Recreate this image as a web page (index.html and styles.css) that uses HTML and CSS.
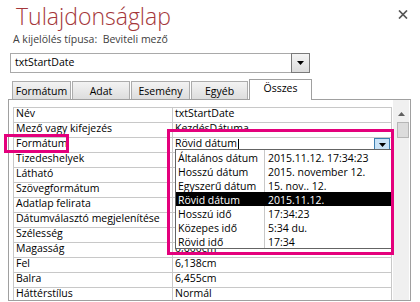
FILE: index.html
```html
<!DOCTYPE html>
<html lang="hu">
<head>
    <meta charset="UTF-8">
    <meta name="viewport" content="width=device-width, initial-scale=1.0">
    <title>Tulajdonságlap</title>
    <link rel="stylesheet" href="styles.css">
</head>
<body>
    <div class="pane">
        <div class="pane-head">
            <h1 class="pane-title">Tulajdonságlap</h1>
            <span class="close-btn">
                <svg width="10" height="9" viewBox="0 0 10 9">
                    <path d="M1 0.5 L9 8.5 M9 0.5 L1 8.5" stroke="#555" stroke-width="1.7" fill="none"/>
                </svg>
            </span>
        </div>
        <div class="sel-type">A kijelölés típusa:&nbsp; Beviteli mező</div>

        <div class="obj-combo">
            <span class="obj-combo-text">txtStartDate</span>
            <span class="combo-btn">
                <svg width="7" height="4" viewBox="0 0 7 4"><path d="M0 0 H7 L3.5 4 Z" fill="#000"/></svg>
            </span>
        </div>

        <div class="tabs">
            <div class="tab tab-fmt">Formátum</div>
            <div class="tab tab-data">Adat</div>
            <div class="tab tab-event">Esemény</div>
            <div class="tab tab-other">Egyéb</div>
            <div class="tab tab-all active">Összes</div>
        </div>

        <div class="sheet-box">
            <div class="sheet">
                <div class="cell">Név</div><div class="cell">txtStartDate</div>
                <div class="cell">Mező vagy kifejezés</div><div class="cell">KezdésDátuma</div>
                <div class="cell">Formátum</div>
                <div class="cell cell-edit">
                    <span>Rövid dátum</span><span class="caret"></span>
                    <span class="drop-btn">
                        <svg width="7" height="4" viewBox="0 0 7 4"><path d="M0 0 H7 L3.5 4 Z" fill="#000"/></svg>
                    </span>
                </div>
                <!-- az értékeket itt eltakarja a lenyíló lista -->
                <div class="cell">Tizedeshelyek</div><div class="cell"></div>
                <div class="cell">Látható</div><div class="cell"></div>
                <div class="cell">Szövegformátum</div><div class="cell"></div>
                <div class="cell">Adatlap felirata</div><div class="cell"></div>
                <div class="cell">Dátumválasztó megjelenítése</div><div class="cell"></div>
                <div class="cell">Szélesség</div><div class="cell"></div>
                <div class="cell">Magasság</div><div class="cell">0,600cm</div>
                <div class="cell">Fel</div><div class="cell">6,138cm</div>
                <div class="cell">Balra</div><div class="cell">6,455cm</div>
                <div class="cell">Háttérstílus</div><div class="cell">Normál</div>
            </div>

            <div class="vscroll">
                <span class="vscroll-up">
                    <svg width="7" height="4" viewBox="0 0 7 4"><path d="M0 4 H7 L3.5 0 Z" fill="#606060"/></svg>
                </span>
                <span class="vscroll-thumb"></span>
            </div>

            <!-- a Formátum lenyíló listája -->
            <div class="format-list">
                <div class="fl-row"><span class="fl-name">Általános dátum</span><span class="fl-sample">2015.11.12. 17:34:23</span></div>
                <div class="fl-row"><span class="fl-name">Hosszú dátum</span><span class="fl-sample">2015. november 12.</span></div>
                <div class="fl-row"><span class="fl-name">Egyszerű dátum</span><span class="fl-sample">15. nov.. 12.</span></div>
                <div class="fl-row selected"><span class="fl-name">Rövid dátum</span><span class="fl-sample">2015.11.12.</span></div>
                <div class="fl-row"><span class="fl-name">Hosszú idő</span><span class="fl-sample">17:34:23</span></div>
                <div class="fl-row"><span class="fl-name">Közepes idő</span><span class="fl-sample">5:34 du.</span></div>
                <div class="fl-row"><span class="fl-name">Rövid idő</span><span class="fl-sample">17:34</span></div>
            </div>
        </div>

        <div class="callout callout-label"></div>
        <div class="callout callout-list"></div>
    </div>
</body>
</html>
```

FILE: styles.css
```css
body {
    margin: 0;
    background-color: #fff;
    color: #000;
    font-family: "Open Sans", "Liberation Sans", sans-serif;
    font-size: 10.5px;
}

.pane {
    position: relative;
    width: 420px;
    height: 302px;
    overflow: hidden;
}

.pane-head {
    display: flex;
    justify-content: space-between;
    align-items: flex-start;
    height: 28px;
    padding: 2px 12px 0 16px;
}

.pane-title {
    margin: 0;
    font-size: 23px;
    font-weight: 300;
    line-height: 28px;
    color: #a4373a;
}

.close-btn {
    display: flex;
    margin-top: 8px;
}

.sel-type {
    padding-left: 13px;
    line-height: 18px;
    color: #404040;
}

/* objektumválasztó */
.obj-combo {
    display: flex;
    align-items: stretch;
    box-sizing: border-box;
    width: 300px;
    height: 20px;
    margin: 5px 0 0 10px;
    border: 1px solid #a9a9a9;
}

.obj-combo-text {
    flex: 1;
    padding-left: 4px;
    line-height: 16px;
}

.combo-btn {
    display: flex;
    align-items: center;
    justify-content: center;
    width: 17px;
    margin: -1px -1px -1px 0;
    border: 1px solid #7a7a7a;
    background: linear-gradient(#f4f4f4, #dcdcdc);
}

/* fülek */
.tabs {
    display: flex;
    align-items: flex-end;
    gap: 1px;
    height: 20px;
    margin: 6px 0 0 12px;
    position: relative;
    z-index: 2;
}

.tab {
    box-sizing: border-box;
    height: 18px;
    border: 1px solid #acacac;
    border-bottom: none;
    background: linear-gradient(#f3f3f3, #dddddd);
    text-align: center;
    line-height: 18px;
}

.tab.active {
    height: 21px;
    margin-bottom: -1px;
    border-color: #a0a0a0;
    background: #fff;
    line-height: 16px;
}

.tab-fmt { width: 59px; }
.tab-data { width: 58px; }
.tab-event { width: 59px; }
.tab-other { width: 57px; }
.tab-all { width: 63px; }

/* tulajdonságrács */
.sheet-box {
    position: relative;
    display: flex;
    align-items: flex-start;
    gap: 1px;
    box-sizing: border-box;
    width: 403px;
    height: 202px;
    margin-left: 8px;
    padding: 7px 1px 0 4px;
    border: 1px solid #a0a0a0;
    overflow: hidden;
}

.sheet {
    display: grid;
    grid-template-columns: 159px 219px;
    grid-auto-rows: 15px;
    border-left: 1px solid #c8c8c8;
    border-top: 1px solid #c8c8c8;
}

.cell {
    box-sizing: border-box;
    padding: 0 0 3px 2px;
    border-right: 1px solid #c8c8c8;
    border-bottom: 1px solid #c8c8c8;
    line-height: 11px;
    white-space: nowrap;
}

.cell-edit {
    display: flex;
    align-items: flex-start;
}

.caret {
    width: 1px;
    height: 11px;
    margin: 1px 0 0 1px;
    background-color: #000;
}

.drop-btn {
    display: flex;
    align-items: flex-end;
    justify-content: center;
    box-sizing: border-box;
    width: 16px;
    height: 12px;
    margin: 0 1px 0 auto;
    padding-bottom: 2px;
    border: 1px solid #3c7fb1;
    background-color: #c9e3f7;
}

.vscroll {
    display: flex;
    flex-direction: column;
    align-items: center;
    width: 17px;
    height: 200px;
    margin-top: -7px;
    padding-top: 12px;
    box-sizing: border-box;
    background-color: #f0f0f0;
}

.vscroll-up {
    display: flex;
    height: 10px;
}

.vscroll-thumb {
    box-sizing: border-box;
    width: 12px;
    height: 16px;
    margin-left: 3px;
    border: 1px solid #b6b6b6;
    background-color: #dcdcdc;
}

/* lenyíló lista */
.format-list {
    position: absolute;
    left: 166px;
    top: 49px;
    width: 215px;
    border: 1px solid #646464;
    background-color: #fff;
    z-index: 3;
}

.fl-row {
    display: flex;
    height: 14px;
    line-height: 17px;
    white-space: nowrap;
}

.fl-name {
    box-sizing: border-box;
    width: 89px;
    padding-left: 2px;
    border-right: 1px solid #c8c8c8;
}

.fl-sample {
    padding-left: 3px;
}

.fl-row.selected {
    background-color: #000;
    color: #fff;
}

.fl-row.selected .fl-name {
    border-right-color: #000;
}

/* kiemelések */
.callout {
    position: absolute;
    box-sizing: border-box;
    border: 3px solid #e4007c;
    z-index: 5;
}

.callout-label {
    left: 4px;
    top: 134px;
    width: 65px;
    height: 19px;
}

.callout-list {
    left: 167px;
    top: 129px;
    width: 227px;
    height: 126px;
}
```
